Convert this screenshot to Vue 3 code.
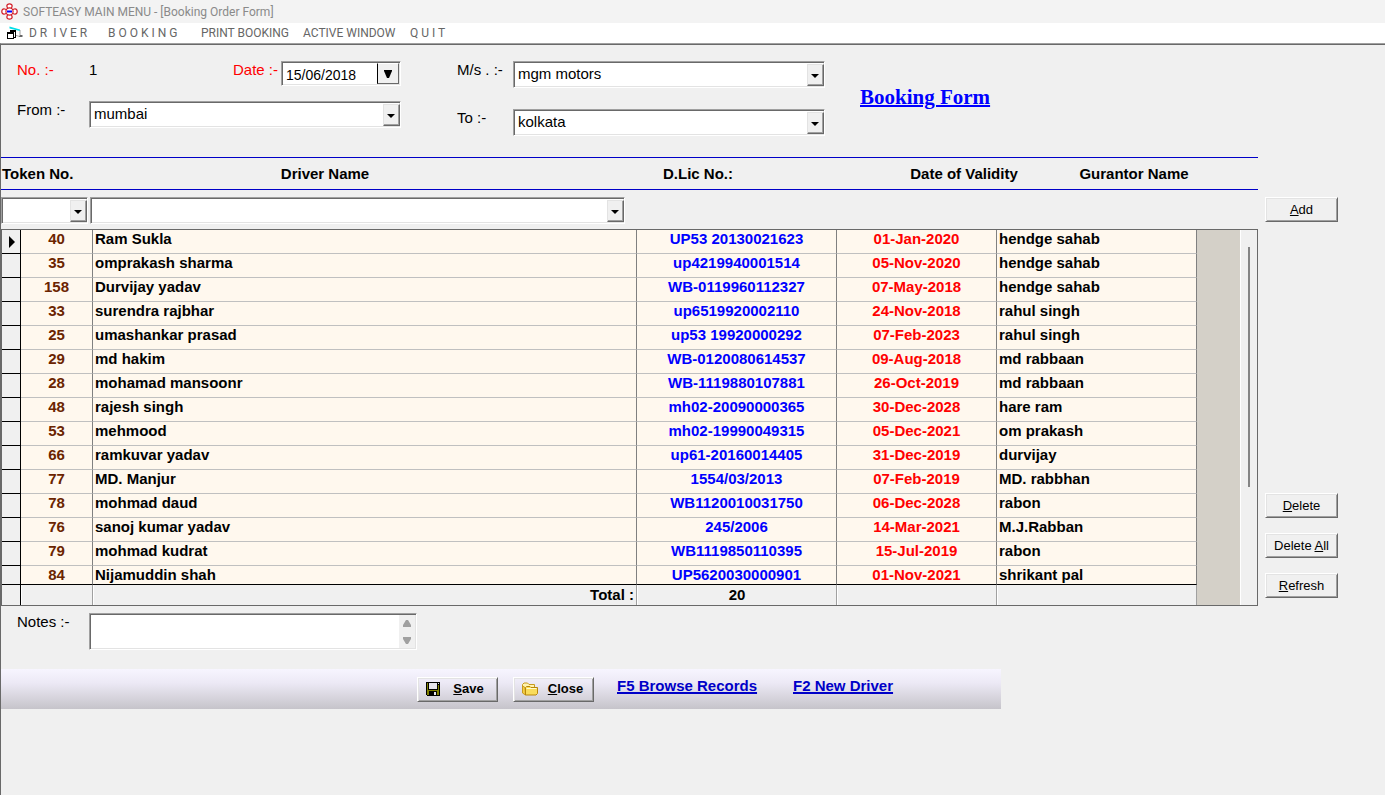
<script setup>
import { ref } from 'vue';

const menus = [
    { label: 'D R  I V E R', width: 'w-driver' },
    { label: 'B O O K I N G', width: 'w-booking' },
    { label: 'PRINT BOOKING', width: 'w-print' },
    { label: 'ACTIVE WINDOW', width: 'w-active' },
    { label: 'Q U I T', width: 'w-quit' },
];

const bookingDate = ref('15/06/2018');
const notes = ref('');

// token, driver, licence no, validity, guarantor
const rows = [
    [40, 'Ram Sukla', 'UP53 20130021623', '01-Jan-2020', 'hendge sahab'],
    [35, 'omprakash sharma', 'up4219940001514', '05-Nov-2020', 'hendge sahab'],
    [158, 'Durvijay yadav', 'WB-0119960112327', '07-May-2018', 'hendge sahab'],
    [33, 'surendra rajbhar', 'up6519920002110', '24-Nov-2018', 'rahul singh'],
    [25, 'umashankar prasad', 'up53 19920000292', '07-Feb-2023', 'rahul singh'],
    [29, 'md hakim', 'WB-0120080614537', '09-Aug-2018', 'md rabbaan'],
    [28, 'mohamad mansoonr', 'WB-1119880107881', '26-Oct-2019', 'md rabbaan'],
    [48, 'rajesh singh', 'mh02-20090000365', '30-Dec-2028', 'hare ram'],
    [53, 'mehmood', 'mh02-19990049315', '05-Dec-2021', 'om prakash'],
    [66, 'ramkuvar yadav', 'up61-20160014405', '31-Dec-2019', 'durvijay'],
    [77, 'MD. Manjur', '1554/03/2013', '07-Feb-2019', 'MD. rabbhan'],
    [78, 'mohmad daud', 'WB1120010031750', '06-Dec-2028', 'rabon'],
    [76, 'sanoj kumar yadav', '245/2006', '14-Mar-2021', 'M.J.Rabban'],
    [79, 'mohmad kudrat', 'WB1119850110395', '15-Jul-2019', 'rabon'],
    [84, 'Nijamuddin shah', 'UP5620030000901', '01-Nov-2021', 'shrikant pal'],
];
</script>

<template>
    <div class="window">
        <header class="title-bar">
            <svg class="app-icon" width="17" height="17" viewBox="0 0 17 17">
                <g fill="#fff" stroke="#d21e28" stroke-width="1.2">
                    <path d="M7 6.5 L5.8 3 Q6 0.8 8.5 0.8 Q11 0.8 11.2 3 L10 6.5 Z" />
                    <path d="M7 10.5 L5.8 14 Q6 16.2 8.5 16.2 Q11 16.2 11.2 14 L10 10.5 Z" />
                    <path d="M6.5 7 L3 5.8 Q0.8 6 0.8 8.5 Q0.8 11 3 11.2 L6.5 10 Z" />
                    <path d="M10.5 7 L14 5.8 Q16.2 6 16.2 8.5 Q16.2 11 14 11.2 L10.5 10 Z" />
                    <circle cx="8.5" cy="8.5" r="3.6" />
                </g>
                <path d="M6 8.5 H11" stroke="#0000ff" stroke-width="2" />
            </svg>
            <span>SOFTEASY MAIN MENU - [Booking Order Form]</span>
        </header>

        <nav class="menu-bar">
            <svg class="form-icon" width="16" height="14" viewBox="0 0 16 14">
                <path d="M3 2 L12.5 4 V10 L9 9.5 H3 Z" fill="#fff" />
                <path d="M2.5 0.5 L13 3.5 V5 L2.5 2.5 Z" fill="#00dfe8" />
                <path d="M13 4 V9.5 M9 9.5 L13 10.5" fill="none" stroke="#a0a0a0" />
                <path d="M13 9 H15.5 V11 H12 Z" fill="#666" />
                <g shape-rendering="crispEdges" fill="none" stroke="#000">
                    <path d="M3.5 6 V4.5 H8.5 V11.5 H6" fill="#fff" />
                    <path d="M0.5 6.5 H6.5 V12.5 H0.5 Z M0 7.5 H7 M3 5.5 H9" fill="#fff" />
                </g>
            </svg>
            <button v-for="m in menus" :key="m.label" type="button" class="menu" :class="m.width">{{ m.label }}</button>
        </nav>

        <main class="form">
            <section class="fields">
                <div class="field-group">
                    <div class="field-row">
                        <span class="label red">No. :-</span>
                        <span class="number">1</span>
                        <label class="label red date-label" for="date">Date :-</label>
                        <div class="date-box sunken">
                            <input id="date" v-model="bookingDate" type="text" />
                            <button type="button" class="date-drop" aria-label="Pick date">
                                <svg width="8" height="8" viewBox="0 0 8 8"><path d="M0 0 H8 V1 L5 8 H3 L0 1 Z" /></svg>
                            </button>
                        </div>
                    </div>
                    <div class="field-row">
                        <label class="label" for="from">From :-</label>
                        <div class="combo">
                            <select id="from" class="sunken"><option>mumbai</option></select>
                            <span class="drop"></span>
                        </div>
                    </div>
                </div>
                <div class="field-group right">
                    <div class="field-row">
                        <label class="label" for="party">M/s . :-</label>
                        <div class="combo">
                            <select id="party" class="sunken"><option>mgm motors</option></select>
                            <span class="drop"></span>
                        </div>
                    </div>
                    <div class="field-row">
                        <label class="label" for="to">To :-</label>
                        <div class="combo">
                            <select id="to" class="sunken"><option>kolkata</option></select>
                            <span class="drop"></span>
                        </div>
                    </div>
                </div>
                <a href="#" class="form-title">Booking Form</a>
            </section>

            <section class="body">
                <div class="list">
                    <div class="headings">
                        <span>Token No.</span>
                        <span class="center">Driver Name</span>
                        <span class="center">D.Lic No.:</span>
                        <span class="center">Date of Validity</span>
                        <span class="center">Gurantor Name</span>
                    </div>
                    <div class="entry">
                        <div class="combo token-combo">
                            <select class="sunken" aria-label="Token No."><option></option></select>
                            <span class="drop"></span>
                        </div>
                        <div class="combo driver-combo">
                            <select class="sunken" aria-label="Driver Name"><option></option></select>
                            <span class="drop"></span>
                        </div>
                    </div>
                    <div class="grid">
                        <table>
                            <colgroup>
                                <col class="c-sel" />
                                <col class="c-token" />
                                <col />
                                <col class="c-lic" />
                                <col class="c-date" />
                                <col class="c-gur" />
                            </colgroup>
                            <tbody>
                                <tr v-for="(r, i) in rows" :key="r[0]">
                                    <td class="sel"><span v-if="i === 0" class="pointer"></span></td>
                                    <td class="token">{{ r[0] }}</td>
                                    <td>{{ r[1] }}</td>
                                    <td class="lic">{{ r[2] }}</td>
                                    <td class="date">{{ r[3] }}</td>
                                    <td>{{ r[4] }}</td>
                                </tr>
                            </tbody>
                            <tfoot>
                                <tr>
                                    <td class="sel"></td>
                                    <td></td>
                                    <td class="total">Total :</td>
                                    <td class="count">20</td>
                                    <td></td>
                                    <td></td>
                                </tr>
                            </tfoot>
                        </table>
                        <div class="filler"></div>
                        <div class="track"><div class="thumb"></div></div>
                    </div>
                </div>
                <div class="actions">
                    <button type="button" class="raised"><u>A</u>dd</button>
                    <div class="actions-bottom">
                        <button type="button" class="raised"><u>D</u>elete</button>
                        <button type="button" class="raised">Delete <u>A</u>ll</button>
                        <button type="button" class="raised"><u>R</u>efresh</button>
                    </div>
                </div>
            </section>

            <section class="notes">
                <label class="label" for="notes">Notes :-</label>
                <div class="notes-box sunken">
                    <textarea id="notes" v-model="notes"></textarea>
                    <div class="notes-scroll">
                        <svg width="10" height="7" viewBox="0 0 10 7"><path d="M4 0 H6 L9 5 V7 H1 V5 Z" /></svg>
                        <svg width="10" height="7" viewBox="0 0 10 7"><path d="M1 0 H9 V2 L6 7 H4 L1 2 Z" /></svg>
                    </div>
                </div>
            </section>

            <footer class="toolbar">
                <button type="button" class="raised tool">
                    <svg width="14" height="14" viewBox="0 0 14 14" shape-rendering="crispEdges">
                        <path d="M0 0 H14 V14 H1 L0 13 Z" fill="#000" />
                        <path d="M1 1 H2 V8 H12 V3 H13 V13 H11 V9 H3 V13 H1 Z" fill="#808000" />
                        <path d="M3 1 H11 V7 H3 Z M12 1 H13 V2 H12 Z M8 10 H10 V13 H8 Z" fill="#e6e4ec" />
                    </svg>
                    <span><u>S</u>ave</span>
                </button>
                <button type="button" class="raised tool">
                    <svg width="16" height="14" viewBox="0 0 16 14">
                        <path d="M0.5 11 V2.5 L2 1 H5.5 L7 2.5 H12.5 V5" fill="#fff3b0" stroke="#c89a1e" />
                        <path d="M3.5 13 L0.5 11 V4 L3 5.5 Z" fill="#f5cf45" stroke="#c89a1e" />
                        <path d="M3.5 13 V5.5 L4.5 4.5 H8 L9 5.5 H15.5 V11.5 L14 13 Z" fill="#f9dc5c" stroke="#b8860b" />
                        <path d="M4.5 6.5 H14.5" stroke="#fffbd0" />
                    </svg>
                    <span><u>C</u>lose</span>
                </button>
                <a href="#" class="browse">F5 Browse Records</a>
                <a href="#" class="new-driver">F2 New Driver</a>
            </footer>
        </main>
    </div>
</template>

<style>
body {
    background: #f0f0f0;
}
</style>

<style scoped>
.window {
    display: flex;
    flex-direction: column;
    min-height: 100vh;
    background: #f0f0f0;
    color: #000;
    font-family: "Liberation Sans", Arial, sans-serif;
    font-size: 15px;
    line-height: 18px;
}

.window * {
    box-sizing: border-box;
}

button,
input,
select,
textarea {
    margin: 0;
    padding: 0;
    border: 0;
    border-radius: 0;
    background: none;
    color: inherit;
    font: inherit;
    outline: none;
}

.title-bar {
    display: flex;
    align-items: center;
    gap: 5px;
    height: 23px;
    padding-left: 1px;
    background: #f3f3f3;
    color: #8a8a8a;
    font-family: Roboto, "Open Sans", sans-serif;
    font-size: 12px;
}

.menu-bar {
    display: flex;
    align-items: center;
    height: 20px;
    padding-left: 7px;
    background: #fff;
    color: #666;
    font-family: Roboto, "Open Sans", sans-serif;
    font-size: 12px;
}

.form-icon {
    margin-right: 6px;
}

.menu {
    text-align: left;
    white-space: pre;
}

.w-driver {
    width: 79px;
}

.w-booking {
    width: 93px;
}

.w-print {
    width: 102px;
}

.w-active {
    width: 107px;
}

.form {
    flex: 1;
    padding-top: 1px;
    border-top: 1px solid #a0a0a0;
    border-left: 1px solid #696969;
    box-shadow: inset 0 1px #696969;
}

/* two-tone 3D edges: the border is the outer line, the shadow the inner one */
.sunken {
    padding: 1px;
    border: 1px solid;
    border-color: #a0a0a0 #fff #fff #a0a0a0;
    background: #fff;
    box-shadow: inset 1px 1px #696969, inset -1px -1px #e3e3e3;
}

.raised {
    height: 25px;
    border: 1px solid;
    border-color: #fff #696969 #696969 #fff;
    background: #f0f0f0;
    box-shadow: inset 1px 1px #e3e3e3, inset -1px -1px #a0a0a0;
    font-size: 13px;
}

.fields {
    display: flex;
    padding: 16px 16px 21px;
}

.field-group {
    display: flex;
    flex-direction: column;
    gap: 15px;
    width: 384px;
}

.field-group.right {
    gap: 21px;
    width: 368px;
    margin-left: 56px;
}

.field-row {
    display: flex;
    align-items: flex-start;
}

.label {
    flex: none;
    width: 72px;
}

.right .label {
    width: 56px;
}

.red {
    color: #f00;
}

.number {
    flex: 1;
}

.date-label {
    width: 48px;
}

.date-box {
    display: flex;
    width: 120px;
    height: 25px;
}

.date-box input {
    flex: 1;
    min-width: 0;
    padding: 2px 3px 0;
    font-size: 14px;
}

.date-drop {
    display: flex;
    align-items: center;
    justify-content: center;
    width: 22px;
    border: 1px solid;
    border-color: #fff #696969 #696969 #000;
    background: #f0f0f0;
}

.combo {
    position: relative;
    flex: 1;
}

.combo select {
    appearance: none;
    display: block;
    width: 100%;
    height: 27px;
    padding: 0 20px 1px 4px;
}

/* arrow button on top of the native select */
.drop {
    position: absolute;
    top: 3px;
    right: 1px;
    width: 17px;
    height: 22px;
    border: 1px solid;
    border-color: #e3e3e3 #696969 #696969 #e3e3e3;
    background: #f0f0f0;
    box-shadow: inset -1px -1px #a0a0a0;
    pointer-events: none;
}

.drop::after {
    content: "";
    position: absolute;
    top: 9px;
    left: 3px;
    border: 4px solid transparent;
    border-top-color: #000;
    border-bottom: 0;
}

.form-title {
    align-self: center;
    margin-left: 35px;
    padding-bottom: 4px;
    color: #00f;
    font: bold 21px/24px "Liberation Serif", "Times New Roman", serif;
    text-decoration-thickness: 2px;
}

.body {
    display: flex;
}

.list {
    flex: 1;
    min-width: 0;
}

.headings {
    display: grid;
    grid-template-columns: 150px 1fr 400px 132px 208px 20px;
    align-items: center;
    height: 33px;
    padding-left: 1px;
    border: 1px solid #0000c8;
    border-width: 1px 0;
    font-weight: bold;
}

.center {
    text-align: center;
}

.entry {
    display: flex;
    gap: 2px;
    padding: 7px 0 5px;
}

.token-combo {
    flex: none;
    width: 87px;
}

.driver-combo {
    flex: 0 1 535px;
}

.grid {
    display: flex;
    border: 1px solid #696969;
}

table {
    flex: 1;
    table-layout: fixed;
    border-collapse: separate;
    border-spacing: 0;
    font-weight: bold;
}

.c-sel {
    width: 19px;
}

.c-token {
    width: 72px;
}

.c-lic,
.c-gur {
    width: 200px;
}

.c-date {
    width: 160px;
}

td {
    padding: 0 2px 5px;
    border-right: 1px solid #808080;
    border-bottom: 1px solid #c0c0c0;
    background: #fff8ee;
    white-space: nowrap;
}

.sel {
    padding: 0;
    border-color: #000;
    background: #f0f0f0;
}

tbody tr:last-child td {
    padding-bottom: 0;
    border-bottom-color: #000;
}

.pointer {
    display: block;
    width: 0;
    margin-left: 7px;
    border: 6px solid transparent;
    border-left-color: #000;
    border-right: 0;
}

.token,
.lic,
.date,
.count {
    text-align: center;
}

.token {
    color: #6b2400;
}

.lic {
    color: #00f;
}

.date {
    color: #f00;
}

tfoot td {
    height: 20px;
    padding: 0 2px;
    border-right-color: #a0a0a0;
    border-bottom: 0;
    border-left: 1px solid #fff;
    background: #f0f0f0;
}

tfoot .sel {
    border-right-color: #000;
    border-left: 0;
}

.total {
    text-align: right;
}

.filler {
    width: 43px;
    background: #d4d0c8;
}

.track {
    width: 17px;
    border-left: 1px solid #fff;
}

.thumb {
    width: 2px;
    height: 64%;
    margin: 17px 0 0 7px;
    background: #858585;
}

.actions {
    display: flex;
    flex-direction: column;
    justify-content: space-between;
    width: 127px;
    padding: 40px 47px 8px 7px;
}

.actions-bottom {
    display: flex;
    flex-direction: column;
    gap: 15px;
}

.notes {
    display: flex;
    padding: 7px 16px 19px;
}

.notes-box {
    display: flex;
    width: 328px;
    height: 37px;
}

.notes-box textarea {
    flex: 1;
    resize: none;
}

.notes-scroll {
    display: flex;
    flex-direction: column;
    align-items: center;
    justify-content: space-between;
    width: 16px;
    padding: 5px 0 4px;
    background: #f0f0f0;
    fill: #a0a0a0;
}

.toolbar {
    display: flex;
    align-items: center;
    max-width: 1000px;
    height: 40px;
    padding-left: 416px;
    background: linear-gradient(#f7f5ff, #ece9f5 35%, #c6c4ca);
    font-weight: bold;
}

.tool {
    display: flex;
    align-items: center;
    width: 81px;
    margin-right: 15px;
    padding-left: 8px;
    background: transparent;
    font-weight: bold;
}

.tool span {
    flex: 1;
    text-align: center;
}

.toolbar a {
    margin-bottom: 6px;
    color: #0000c8;
    text-decoration-thickness: 2px;
}

.browse {
    width: 176px;
    margin-left: 8px;
}
</style>
